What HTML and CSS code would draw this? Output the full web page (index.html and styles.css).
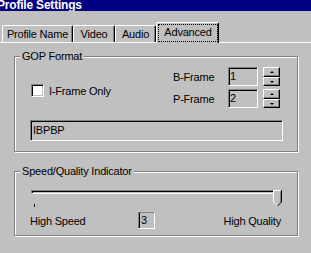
FILE: index.html
```html
<!DOCTYPE html>
<html lang="en">
  <head>
    <meta charset="utf8">
    <title>Profile Settings</title>
    <link rel="stylesheet" href="styles.css">
  </head>
  <body>
    <div class="titlebar">Profile Settings</div>

    <div class="tabs">
      <div class="tab tab-name">Profile Name</div>
      <div class="tab tab-video">Video</div>
      <div class="tab tab-audio">Audio</div>
      <div class="tab tab-advanced is-active"><span class="focus">Advanced</span></div>
    </div>

    <div class="panel">
      <div class="group group-gop">
        <span class="legend">GOP Format</span>
        <div class="gop-top">
          <label class="check"><span class="checkbox"></span>I-Frame Only</label>
          <div class="frames">
            <span class="frame-label">B-Frame</span>
            <span class="field">1</span>
            <span class="spin"><span class="spin-btn up"></span><span class="spin-btn down"></span></span>
            <span class="frame-label">P-Frame</span>
            <span class="field">2</span>
            <span class="spin"><span class="spin-btn up"></span><span class="spin-btn down"></span></span>
          </div>
        </div>
        <div class="field gop-field">IBPBP</div>
      </div>

      <div class="group group-speed">
        <span class="legend">Speed/Quality Indicator</span>
        <div class="slider">
          <div class="track"></div>
          <span class="tick"></span>
          <svg class="thumb" width="9" height="16" viewBox="0 0 9 16" shape-rendering="crispEdges">
            <path d="M0 0H9V12L4.5 16L0 12Z" fill="#c0c0c0"/>
            <path d="M0.5 12V0.5H8" fill="none" stroke="#fff"/>
            <path d="M0.5 12L4.5 16" fill="none" stroke="#fff" shape-rendering="auto"/>
            <path d="M7.5 1V11.5" fill="none" stroke="#808080"/>
            <path d="M8.5 0V12" fill="none" stroke="#000"/>
            <path d="M8.5 12L4.5 16" fill="none" stroke="#000" shape-rendering="auto"/>
          </svg>
        </div>
        <div class="speed-labels">
          <span class="speed-low">High Speed</span>
          <span class="value">3</span>
          <span class="speed-high">High Quality</span>
        </div>
      </div>
    </div>
  </body>
</html>
```

FILE: styles.css
```css
html, body {
  margin: 0;
  background-color: #c0c0c0;
}

body {
  width: 311px;
  height: 253px;
  overflow: hidden;
  font-family: "Liberation Sans", Arial, sans-serif;
  font-size: 11px;
  letter-spacing: -0.2px;
  color: #000;
}

.titlebar {
  height: 11px;
  line-height: 10px;
  background-color: #000080;
  color: #fff;
  font-weight: bold;
  font-size: 12px;
  text-indent: -3px;
  white-space: nowrap;
  overflow: hidden;
}

/* tab strip */
.tabs {
  display: flex;
  align-items: flex-end;
  height: 31px;
  padding-left: 2px;
}

.tab {
  box-sizing: border-box;
  height: 17px;
  line-height: 16px;
  text-align: center;
  white-space: nowrap;
  border-top: 1px solid #fff;
  border-left: 1px solid #fff;
  border-right: 1px solid #000;
  border-radius: 2px 2px 0 0;
  box-shadow: inset -1px 0 0 #808080;
}
.tab-name { width: 71px; }
.tab-video { width: 42px; }
.tab-audio { width: 41px; }
.tab-advanced { width: 63px; }

.tab.is-active {
  position: relative;
  z-index: 1;
  height: 21px;
  margin-bottom: -1px;
  padding: 1px 0 0 1px;
  background-color: #c0c0c0;
}

.focus {
  display: block;
  box-sizing: border-box;
  height: 18px;
  line-height: 14px;
  border: 1px dotted #000;
}

.panel {
  border-top: 1px solid #fff;
  padding: 13px 0 0 14px;
}

/* group boxes */
.group {
  position: relative;
  box-sizing: border-box;
  width: 284px;
  border: 1px solid #808080;
  box-shadow: inset 1px 1px 0 #fff, 1px 1px 0 #fff;
  padding: 10px 14px 10px 15px;
}

.legend {
  position: absolute;
  top: -7px;
  left: 5px;
  padding: 0 2px;
  line-height: 13px;
  background-color: #c0c0c0;
  white-space: nowrap;
}

.gop-top {
  display: flex;
  justify-content: space-between;
  align-items: center;
}

.check {
  display: flex;
  align-items: center;
  gap: 5px;
  margin: 6px 0 0 1px;
}

.checkbox {
  box-sizing: border-box;
  width: 13px;
  height: 13px;
  background-color: #fff;
  border: 1px solid;
  border-color: #808080 #fff #fff #808080;
  box-shadow: inset 1px 1px 0 #000, inset -1px -1px 0 #c0c0c0;
}

.frames {
  display: grid;
  grid-template-columns: 55px 30px auto;
  grid-auto-rows: 19px;
  row-gap: 3px;
  align-items: center;
  margin-right: 3px;
}

.field {
  box-sizing: border-box;
  height: 19px;
  line-height: 17px;
  padding-left: 1px;
  border: 1px solid;
  border-color: #808080 #fff #fff #808080;
  box-shadow: inset 1px 1px 0 #000;
}

.spin {
  display: flex;
  flex-direction: column;
  width: 17px;
  height: 19px;
  margin-left: 5px;
}

.spin-btn {
  display: flex;
  align-items: center;
  justify-content: center;
  box-sizing: border-box;
  height: 10px;
  border: 1px solid;
  border-color: #fff #000 #000 #fff;
  box-shadow: inset -1px -1px 0 #808080;
}
.spin-btn.down {
  height: 9px;
}
.spin-btn::before {
  content: "";
  border-left: 2px solid transparent;
  border-right: 2px solid transparent;
}
.spin-btn.up::before {
  border-bottom: 2px solid #000;
}
.spin-btn.down::before {
  border-top: 2px solid #000;
}

.gop-field {
  height: 21px;
  margin-top: 12px;
  padding: 1px 0 0 2px;
}

/* speed / quality */
.group-speed {
  margin-top: 19px;
  padding: 13px 14px 6px 15px;
}

.slider {
  position: relative;
  height: 18px;
  margin-left: 1px;
}

.track {
  box-sizing: border-box;
  width: 247px;
  height: 4px;
  margin-top: 5px;
  border: 1px solid;
  border-color: #808080 #fff #fff #808080;
  box-shadow: inset 1px 1px 0 #000;
}

.tick {
  position: absolute;
  left: 3px;
  top: 14px;
  width: 1px;
  height: 3px;
  background-color: #000;
}

.thumb {
  position: absolute;
  left: 242px;
  top: 0;
}

.speed-labels {
  display: flex;
  align-items: center;
  height: 17px;
  margin-top: 4px;
}

.speed-low {
  width: 108px;
}

.value {
  box-sizing: border-box;
  width: 17px;
  height: 17px;
  line-height: 15px;
  padding-left: 2px;
  border: 1px solid;
  border-color: #808080 #fff #fff #808080;
  box-shadow: inset 1px 0 0 #000;
}

.speed-high {
  margin-left: auto;
  margin-right: 2px;
}
```
